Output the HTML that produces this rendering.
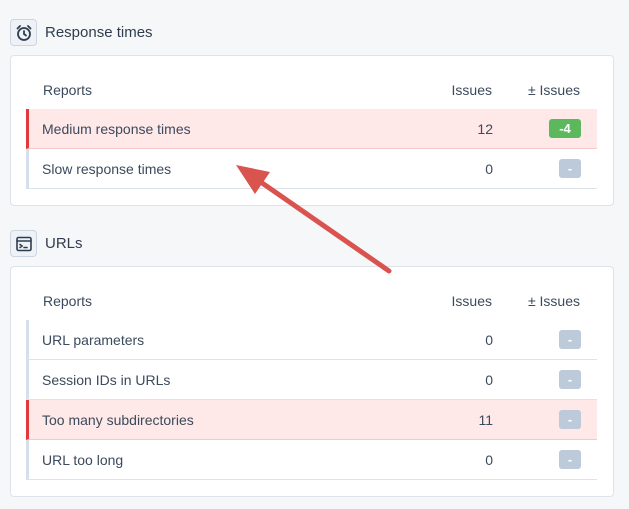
<!DOCTYPE html>
<html><head><style>
*{box-sizing:border-box;margin:0;padding:0}
body{width:629px;height:509px;background:#f6f7f9;font-family:"Liberation Sans",sans-serif;color:#3b4a5c;position:relative;overflow:hidden;font-size:14px}
.ib{position:absolute;left:10px;width:27px;height:27px;border:1px solid #ccd6e2;border-radius:4px;background:#eef2f7;display:flex;align-items:center;justify-content:center}
.title{position:absolute;left:45px;font-size:15px;color:#2f3d4e}
.card{position:absolute;left:10px;width:604px;background:#fff;border:1px solid #dde3ea;border-radius:4px}
.hdr{position:absolute;left:15px;width:571px;height:20px;font-size:14px;color:#3b4a5c}
.row{position:absolute;left:15px;width:571px;height:40px;border-left:3px solid #d7e0ea;border-bottom:1px solid #dde3ea;font-size:14px}
.row.red{background:#ffe8e8;border-left-color:#e4393c;border-bottom-color:#f5c9cc;}
.row span,.hdr span{position:absolute;top:12px}
.n{right:104px;text-align:right}
.b{position:absolute;right:16px;top:10px;height:19px;border-radius:3px;color:#fff;font-weight:bold;font-size:13px;text-align:center;line-height:19px}
.g{background:#5cb85c;width:32px}
.s{background:#bccad9;width:22px}
</style></head><body>
<div class="ib" style="top:19px"><svg width="18" height="18" viewBox="0 0 18 18" fill="none" stroke="#2f3d4e" stroke-width="1.8" stroke-linecap="round"><circle cx="9" cy="10" r="6"/><path d="M9 7v3l2 1.5M2.5 4.5l2.5-2.5M15.5 4.5l-2.5-2.5"/></svg></div>
<div class="title" style="top:24px">Response times</div>
<div class="card" style="top:55px;height:151px">
<div class="hdr" style="top:26px"><span style="left:17px;top:0">Reports</span><span style="right:105px;top:0">Issues</span><span style="right:17px;top:0">± Issues</span></div>
<div class="row red" style="top:53px"><span style="left:13px">Medium response times</span><span class="n">12</span><div class="b g">-4</div></div>
<div class="row" style="top:93px"><span style="left:13px">Slow response times</span><span class="n">0</span><div class="b s">-</div></div>
</div>
<div class="ib" style="top:230px"><svg width="18" height="18" viewBox="0 0 18 18" fill="none" stroke="#2f3d4e" stroke-width="1.6" stroke-linecap="round"><rect x="2" y="2.5" width="14" height="13" rx="1.5"/><path d="M2 6h14M5 9.5l2 1.5-2 1.5M9 12.5h3"/></svg></div>
<div class="title" style="top:235px">URLs</div>
<div class="card" style="top:266px;height:231px">
<div class="hdr" style="top:26px"><span style="left:17px;top:0">Reports</span><span style="right:105px;top:0">Issues</span><span style="right:17px;top:0">± Issues</span></div>
<div class="row" style="top:53px"><span style="left:13px">URL parameters</span><span class="n">0</span><div class="b s">-</div></div>
<div class="row" style="top:93px"><span style="left:13px">Session IDs in URLs</span><span class="n">0</span><div class="b s">-</div></div>
<div class="row red" style="top:133px"><span style="left:13px">Too many subdirectories</span><span class="n">11</span><div class="b s">-</div></div>
<div class="row" style="top:173px"><span style="left:13px">URL too long</span><span class="n">0</span><div class="b s">-</div></div>
</div>
<svg style="position:absolute;left:0;top:0" width="629" height="509"><path d="M389 271L255 178" stroke="#d9534f" stroke-width="5" stroke-linecap="round"/><path d="M236 165L270 172L255 194Z" fill="#d9534f"/></svg>
</body></html>
